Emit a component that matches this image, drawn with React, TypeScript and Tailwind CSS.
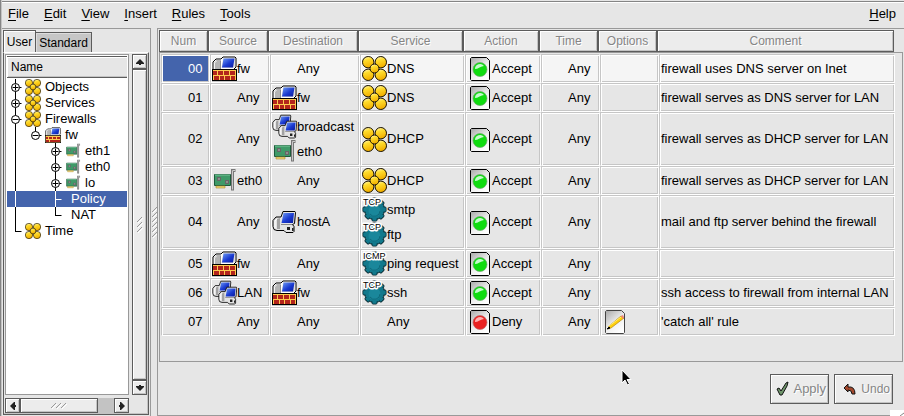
import React from "react";

type IconName = "fw" | "group" | "host" | "net" | "nic" | "tcp" | "icmp";

const SANS = "font-['Liberation_Sans',Arial,sans-serif]";

function Monitor() {
  return (
    <g>
      <path d="M1 14V6l3-3h5l2-2h12l1 1v9l-2 2v1z" fill="#fff" stroke="#000" />
      <path d="M2 13.500V6.500L4.500 4H9v9.500z" fill="#b4b4b4" />
      <path d="M2.500 13V7l2-2" stroke="#f4f4f4" fill="none" />
      <path d="M8.500 5v9" stroke="#8d8d8d" />
      <path d="M11 2h12v9l-2 1H9.500z" fill="#dedede" />
      <path d="M11.500 2.500H22.500L21 11.500H10z" fill="url(#screen)" />
    </g>
  );
}

function SmallPc() {
  return (
    <g>
      <path d="M9 7l2-5.500h12l.5 1-1 11-2 1 1.500 2v5l-1 1h-7l-2-2H5l-3-1-1-3v-6l3-3.500z" fill="#e4e4e4" stroke="#000" />
      <path d="M5 9l3-1v11H5z" fill="#a2a2a2" />
      <path d="M3 18v-7l2-2" stroke="#fff" fill="none" />
      <path d="M11.500 3h10.500l-1 10H9.500z" fill="url(#screen)" />
      <path d="M9 14h11v1H9z" fill="#8a8a8a" />
      <path d="M15 17h3v3h-3zM20 18h1.500v3H20z" fill="#222" />
    </g>
  );
}

function Gear() {
  return (
    <g>
      <g fill="#12798c" stroke="#06262d">
        {[0, 45, 90, 135].map((a) => (
          <rect key={a} x="10" y="1" width="5" height="23" rx="1" transform={`rotate(${a} 12.500 12.500)`} />
        ))}
        <circle cx="12.500" cy="12.500" r="10" />
      </g>
      <g fill="#12798c">
        {[0, 45, 90, 135].map((a) => (
          <rect key={a} x="10.500" y="1.500" width="4" height="22" transform={`rotate(${a} 12.500 12.500)`} />
        ))}
      </g>
      <circle cx="12.500" cy="14" r="6" fill="#1a879b" />
      <path d="M8 17a5.500 5.500 0 0 0 10-3" fill="none" stroke="#0f6a7b" />
    </g>
  );
}

function Icon({ name, size = 25 }: { name: IconName; size?: number }) {
  return (
    <svg width={size} height={size} viewBox="0 0 25 25" className="shrink-0" aria-hidden="true">
      {name === "fw" && (
        <g>
          <Monitor />
          <rect x="0.500" y="13.500" width="24" height="11" fill="#ffc94f" stroke="#000" />
          <path
            d="M1 15h4v4H1zM6 15h5v4H6zM12 15h5v4h-5zM18 15h5v4h-5zM2 20h5v4H2zM8 20h4v4H8zM13 20h5v4h-5zM19 20h4v4h-4z"
            fill="#b3241c"
            shapeRendering="crispEdges"
          />
        </g>
      )}
      {name === "group" && (
        <g stroke="#1a1200">
          {[[6.2, 6.2], [18.8, 6.2], [6.2, 18.8], [18.8, 18.8]].map(([x, y]) => (
            <circle key={`${x}-${y}`} cx={x} cy={y} r="5.700" fill="url(#gold)" />
          ))}
          <circle cx="12.500" cy="12.500" r="4.500" fill="url(#gold)" />
        </g>
      )}
      {name === "host" && <SmallPc />}
      {name === "net" && (
        <g>
          <g transform="scale(.8)"><SmallPc /></g>
          <g transform="translate(6 6) scale(.8)"><SmallPc /></g>
        </g>
      )}
      {name === "nic" && (
        <g>
          <path d="M2.500 6.500h16v11h-16z" fill="#3f9a68" stroke="#1e5b3b" />
          <path d="M3 7h15" stroke="#7cc79c" />
          <path d="M5 9h4v4H5zM13 12h4v4h-4z" fill="#666" />
          <path d="M6 10h2v2H6zM14 13h2v2h-2z" fill="#8e8e8e" />
          <path d="M4 18h9v2H4z" fill="#f0d777" stroke="#a88a2c" strokeWidth=".6" />
          <path d="M23.500 2.500h-3v20" fill="none" stroke="#777" strokeWidth="3" />
          <path d="M23 2.500h-2.500v19" fill="none" stroke="#c9c9c9" />
        </g>
      )}
      {(name === "tcp" || name === "icmp") && (
        <g>
          <Gear />
          <text
            x="1"
            y="8"
            fontSize="9"
            fontFamily="Liberation Sans, Arial, sans-serif"
            fill="#000"
            stroke="#fff"
            strokeWidth="3"
            strokeLinejoin="round"
            paintOrder="stroke"
          >
            {name === "tcp" ? "TCP" : "ICMP"}
          </text>
        </g>
      )}
    </svg>
  );
}

function ActionIcon({ kind }: { kind: "Accept" | "Deny" | "options" }) {
  const options = kind === "options";
  return (
    <svg width="25" height="25" viewBox="0 0 25 25" className="shrink-0" aria-hidden="true">
      <path d="M3.500 2.500l1-1h15l3 3v19l-1 1h-17l-1-1z" fill="url(#page)" stroke={options ? "#444" : "#000"} />
      {options ? (
        <g>
          <path d="M6 20l1-3L19 7l3 2L9 19z" fill="#ffcf0a" stroke="#b38610" strokeWidth=".7" />
          <path d="M7 17L19 8" stroke="#ffef80" />
          <path d="M19 7l2-1 1 2-1 2z" fill="#ef8181" />
          <path d="M5 20l3-1-1-1z" fill="#000" stroke="#000" />
        </g>
      ) : (
        <g>
          <circle cx="13" cy="13.500" r="7" fill={kind === "Deny" ? "#ea2222" : "#10dc10"} stroke={kind === "Deny" ? "#b56a6a" : "#6aa56a"} strokeWidth=".7" />
          <path d="M8 13a5 5 0 0 1 9-3q-2 0-4.500 1.500T8 13z" fill={kind === "Deny" ? "#ffb0b0" : "#c4facc"} />
        </g>
      )}
    </svg>
  );
}

function Defs() {
  return (
    <svg width="0" height="0" className="absolute" aria-hidden="true">
      <defs>
        <linearGradient id="screen" x1="0" y1="0" x2="1" y2="1">
          <stop offset="0" stopColor="#6f9cf4" />
          <stop offset=".55" stopColor="#1a3ad0" />
          <stop offset="1" stopColor="#0a1a9c" />
        </linearGradient>
        <linearGradient id="gold" x1="0" y1="0" x2=".3" y2="1">
          <stop offset="0" stopColor="#fffbd0" />
          <stop offset=".4" stopColor="#ffdc2c" />
          <stop offset="1" stopColor="#f2b000" />
        </linearGradient>
        <linearGradient id="page" x1="0" y1="0" x2=".7" y2="1">
          <stop offset="0" stopColor="#a8a8a8" />
          <stop offset=".6" stopColor="#efefef" />
          <stop offset="1" stopColor="#fff" />
        </linearGradient>
      </defs>
    </svg>
  );
}

type Entry = { icon?: IconName; text: string };
type Rule = { src: Entry[]; dst: Entry[]; srv: Entry[]; action: "Accept" | "Deny"; options?: boolean; comment: string };

const ANY: Entry[] = [{ text: "Any" }];
const FW: Entry[] = [{ icon: "fw", text: "fw" }];

const RULES: Rule[] = [
  { src: FW, dst: ANY, srv: [{ icon: "group", text: "DNS" }], action: "Accept", comment: "firewall uses DNS server on Inet" },
  { src: ANY, dst: FW, srv: [{ icon: "group", text: "DNS" }], action: "Accept", comment: "firewall serves as DNS server for LAN" },
  {
    src: ANY,
    dst: [{ icon: "net", text: "broadcast" }, { icon: "nic", text: "eth0" }],
    srv: [{ icon: "group", text: "DHCP" }],
    action: "Accept",
    comment: "firewall serves as DHCP server for LAN",
  },
  { src: [{ icon: "nic", text: "eth0" }], dst: ANY, srv: [{ icon: "group", text: "DHCP" }], action: "Accept", comment: "firewall serves as DHCP server for LAN" },
  {
    src: ANY,
    dst: [{ icon: "host", text: "hostA" }],
    srv: [{ icon: "tcp", text: "smtp" }, { icon: "tcp", text: "ftp" }],
    action: "Accept",
    comment: "mail and ftp server behind the firewall",
  },
  { src: FW, dst: ANY, srv: [{ icon: "icmp", text: "ping request" }], action: "Accept", comment: "" },
  { src: [{ icon: "net", text: "LAN" }], dst: FW, srv: [{ icon: "tcp", text: "ssh" }], action: "Accept", comment: "ssh access to firewall from internal LAN" },
  { src: ANY, dst: ANY, srv: ANY, action: "Deny", options: true, comment: "'catch all' rule" },
];

const HEADERS = ["Num", "Source", "Destination", "Service", "Action", "Time", "Options", "Comment"];
const ROW = "grid grid-cols-[49px_60px_90px_105px_76px_59px_59px_minmax(0,1fr)]";
const CELL =
  "flex flex-col justify-center overflow-hidden border border-t-[#c6c6c6] border-l-[#c6c6c6] border-r-white border-b-white p-px shadow-[inset_1px_1px_0_#fff,inset_-1px_-1px_0_#c6c6c6]";
const RAISED = "border border-[#5c5c5c] bg-[#ececec] shadow-[inset_1px_1px_0_#fff,inset_-1px_-1px_0_#c3c3c3]";
const DISABLED = "text-[#858585] [text-shadow:1px_1px_0_#fff]";

function Entries({ items }: { items: Entry[] }) {
  return (
    <>
      {items.map((e) => (
        <div key={e.text} className="flex h-[25px] items-center whitespace-nowrap">
          {e.icon ? <Icon name={e.icon} /> : <span className="w-[25px] shrink-0" />}
          {e.text}
        </div>
      ))}
    </>
  );
}

function PolicyTable() {
  return (
    <table className="block">
      <thead className="block">
        <tr className={`${ROW} mr-[9px] h-[22px]`}>
          {HEADERS.map((h) => (
            <th key={h} scope="col" className={`flex items-center justify-center font-normal ${RAISED} ${DISABLED}`}>
              {h}
            </th>
          ))}
        </tr>
      </thead>
      <tbody className="mt-0.5 mr-2 ml-0.5 block text-[13px]">
        {RULES.map((r, i) => (
          <tr key={i} className={`${ROW} min-h-[29px] ${i === 0 ? "bg-[#f5f5f5]" : ""}`}>
            <td className={`${CELL} ${i === 0 ? "bg-[#4464ac] text-white" : ""}`}>
              <Entries items={[{ text: `0${i}` }]} />
            </td>
            <td className={CELL}><Entries items={r.src} /></td>
            <td className={CELL}><Entries items={r.dst} /></td>
            <td className={CELL}><Entries items={r.srv} /></td>
            <td className={CELL}>
              <div className="flex h-[25px] items-center">
                <ActionIcon kind={r.action} />
                {r.action}
              </div>
            </td>
            <td className={CELL}><Entries items={ANY} /></td>
            <td className={CELL}>{r.options && <ActionIcon kind="options" />}</td>
            <td className={`${CELL} whitespace-nowrap`}>{r.comment}</td>
          </tr>
        ))}
      </tbody>
    </table>
  );
}

type Node = { label: string; level: 0 | 1 | 2; icon?: IconName; mark?: "+" | "-"; last?: boolean; selected?: boolean };

const NODES: Node[] = [
  { label: "Objects", level: 0, icon: "group", mark: "+" },
  { label: "Services", level: 0, icon: "group", mark: "+" },
  { label: "Firewalls", level: 0, icon: "group", mark: "-" },
  { label: "fw", level: 1, icon: "fw", mark: "-" },
  { label: "eth1", level: 2, icon: "nic", mark: "+" },
  { label: "eth0", level: 2, icon: "nic", mark: "+" },
  { label: "lo", level: 2, icon: "nic", mark: "+" },
  { label: "Policy", level: 2, selected: true },
  { label: "NAT", level: 2, last: true },
  { label: "Time", level: 0, icon: "group", last: true },
];

function Guides({ node }: { node: Node }) {
  const x = 8.5 + node.level * 20;
  const width = node.icon ? 18 + node.level * 20 : 64;
  return (
    <svg width={width} height="16" className="shrink-0" fill="none" stroke="currentColor" aria-hidden="true">
      {node.level > 0 && <path d="M8.500 0V16" />}
      <path d={node.level === 1 ? `M${x} 0V8` : `M${x} 0V${node.last ? 9 : 16}`} />
      <path d={`M${x} 8.500h6`} />
      {node.mark && (
        <>
          <circle cx={x} cy="8.500" r="4" fill="#fff" />
          <path d={node.mark === "+" ? `M${x - 3} 8.500h6M${x} 5.500v6` : `M${x - 3} 8.500h6`} />
        </>
      )}
    </svg>
  );
}

function Arrow({ dir }: { dir: "up" | "down" | "left" | "right" }) {
  const d = {
    up: "M4 1L8 5V6H5V7H3V6H0V5z",
    down: "M3 1H5V2H8V3L4 7L0 3V2H3z",
    left: "M1 4L5 0H6V3H7V5H6V8H5z",
    right: "M7 4L3 0H2V3H1V5H2V8H3z",
  }[dir];
  return <svg width="8" height="8" viewBox="0 0 8 8" fill="#222" aria-hidden="true"><path d={d} /></svg>;
}

function ScrollButton({ dir }: { dir: "up" | "down" | "left" | "right" }) {
  return (
    <button aria-label={`Scroll ${dir}`} className={`flex size-[15px] shrink-0 items-center justify-center ${RAISED}`}>
      <Arrow dir={dir} />
    </button>
  );
}

function Grip({ w, h, d }: { w: number; h: number; d: string }) {
  return (
    <svg width={w} height={h} fill="none" aria-hidden="true">
      <path d={d} stroke="#fff" transform="translate(1 1)" />
      <path d={d} stroke="#999" />
    </svg>
  );
}

function Sidebar() {
  return (
    <aside className="flex w-[149px] shrink-0 flex-col border border-b-0 border-l-0 border-[#999] p-px">
      <div className="flex items-end" role="tablist">
        <button role="tab" aria-selected="true" className="h-[22px] w-[33px] border border-b-0 border-[#5c5c5c] text-center shadow-[inset_1px_1px_0_#fff]">
          User
        </button>
        <button role="tab" aria-selected="false" className="h-[20px] w-[56px] border border-b-0 border-l-0 border-[#5c5c5c] bg-[#c6c6c6] text-center shadow-[inset_1px_1px_0_#ddd]">
          Standard
        </button>
      </div>
      <div className="flex min-h-0 flex-1 flex-col gap-[3px] border border-t-white border-r-[#5c5c5c] border-b-[#5c5c5c] border-l-[#5c5c5c] pt-px pl-px shadow-[inset_-1px_-1px_0_#c3c3c3]">
        <div className="flex min-h-0 flex-1 gap-[3px]">
          <div className="min-w-0 flex-1 border border-[#999] bg-white p-px">
            <div className="flex h-[22px] items-center border-t border-b border-[#5c5c5c] bg-[#e6e6e6] pl-1 shadow-[inset_1px_1px_0_#fff,inset_0_-1px_0_#c3c3c3]">
              Name
            </div>
            <ul role="tree" className="pt-px text-[13px]">
              {NODES.map((n) => (
                <li
                  key={n.label}
                  role="treeitem"
                  aria-selected={!!n.selected}
                  className={`flex h-4 items-center ${n.selected ? "bg-[#4464ac] text-white" : ""}`}
                >
                  <Guides node={n} />
                  {n.icon && <span className="mr-1"><Icon name={n.icon} size={16} /></span>}
                  {n.label}
                </li>
              ))}
            </ul>
          </div>
          <div className="mr-px flex w-[15px] flex-col">
            <ScrollButton dir="up" />
            <div className={`flex flex-1 items-center justify-center ${RAISED}`}>
              <Grip w={8} h={18} d="M1 6L6 1M1 11L6 6M1 16L6 11" />
            </div>
            <ScrollButton dir="down" />
          </div>
        </div>
        <div className="mr-[19px] mb-px flex bg-[#c3c3c3]">
          <ScrollButton dir="left" />
          <div className={`mr-4 flex flex-1 items-center justify-center ${RAISED}`}>
            <Grip w={18} h={8} d="M1 6L6 1M6 6L11 1M11 6L16 1" />
          </div>
          <ScrollButton dir="right" />
        </div>
      </div>
    </aside>
  );
}

function MenuItem({ label }: { label: string }) {
  return (
    <button>
      <span className="underline underline-offset-2">{label[0]}</span>
      {label.slice(1)}
    </button>
  );
}

export default function App() {
  return (
    <div className={`relative flex h-screen overflow-hidden bg-[#e6e6e6] text-[12px] leading-4 text-black ${SANS}`}>
      <Defs />
      <div className="w-0.5 shrink-0 border-r border-[#c3c3c3] bg-[#858585]" />
      <div className="flex min-w-0 flex-1 flex-col">
        <div className="h-0.5 shrink-0 border-b border-[#858585]" />
        <nav className="flex h-[26px] shrink-0 items-center gap-[15px] border-t border-white pr-2 pb-1 pl-1.5 text-[13px]">
          {["File", "Edit", "View", "Insert", "Rules", "Tools"].map((m) => (
            <MenuItem key={m} label={m} />
          ))}
          <span className="flex-1" />
          <MenuItem label="Help" />
        </nav>
        <div className="flex min-h-0 flex-1">
          <Sidebar />
          <div className="flex w-1.5 shrink-0 items-center justify-center">
            <Grip w={6} h={32} d="M1 6L6 1M1 11L6 6M1 16L6 11M1 21L6 16M1 26L6 21M1 31L6 26" />
          </div>
          <main className="flex min-w-0 flex-1 flex-col border-t border-b border-l border-[#999]">
            <section className="mr-px ml-px flex min-h-0 flex-1 flex-col pt-px">
              <div className="relative flex-1">
                <div className="absolute inset-x-0 top-[22px] bottom-0 border border-[#999]" />
                <div className="relative"><PolicyTable /></div>
              </div>
            </section>
            <div className="flex gap-[5px] self-end pt-3 pr-[11px] pb-[11px]">
              <button disabled className={`flex h-[30px] w-[59px] items-center justify-between pr-0.5 pl-1 text-[13px] ${RAISED} ${DISABLED}`}>
                <svg width="16" height="16" viewBox="0 0 16 16" aria-hidden="true">
                  <path d="M2 8l2-1 2 3 5-8 2-1-1 4-5 9H5z" fill="#70966c" stroke="#111" />
                </svg>
                Apply
              </button>
              <button disabled className={`flex h-[30px] w-[59px] items-center justify-between pr-0.5 pl-2 text-[12px] ${RAISED} ${DISABLED}`}>
                <svg width="14" height="14" viewBox="0 0 14 14" aria-hidden="true">
                  <path d="M1 6l4-4v3q7-1 7 7l-3 0q0-4-4-4v2z" fill="#a3482c" stroke="#111" />
                </svg>
                Undo
              </button>
            </div>
          </main>
        </div>
      </div>
      <svg width="14" height="18" className="absolute top-[369px] left-[621px]" aria-hidden="true">
        <path d="M1 1v13l3-3 2.500 5 2-1-2.500-4.500h4z" fill="#000" stroke="#fff" />
      </svg>
      <svg width="14" height="6" className="absolute right-0 bottom-0" aria-hidden="true">
        <path d="M0 0h14v6H0z" fill="#fff" />
        <path d="M10 6l4-3" stroke="#858585" />
      </svg>
    </div>
  );
}
